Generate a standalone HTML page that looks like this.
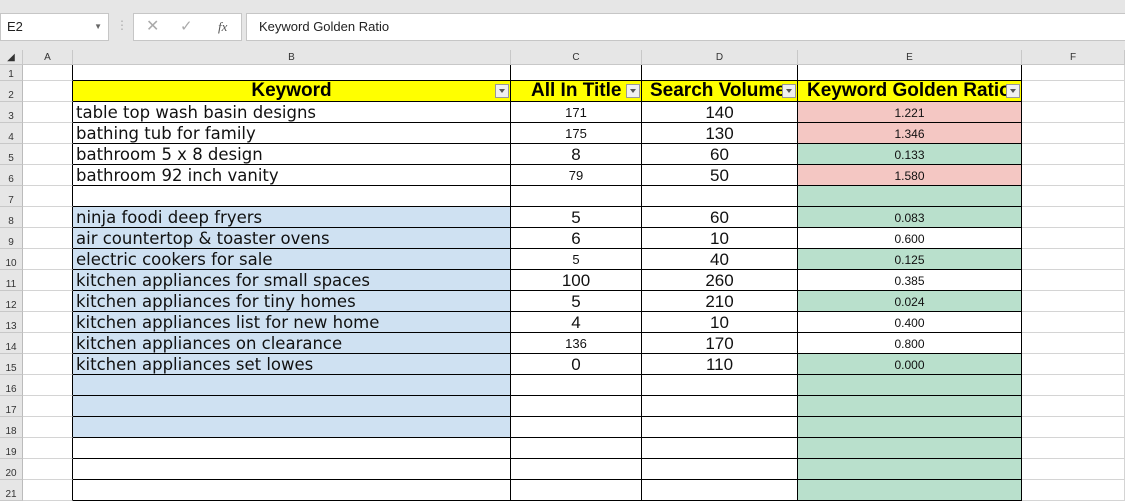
<!DOCTYPE html>
<html><head><style>
body{margin:0;width:1125px;height:484px;overflow:hidden;background:#fff;font-family:"Liberation Sans",sans-serif;position:relative}
.top{position:absolute;left:0;top:0;width:1125px;height:50px;background:#e6e6e6}
.box{position:absolute;background:#fff;border:1px solid #c6c6c6;height:26px;top:13px;font-size:13px;line-height:26px;color:#222}
table{position:absolute;left:0;top:50px;border-collapse:separate;border-spacing:0;table-layout:fixed}
td{padding:0;border-right:1px solid #d4d4d4;border-bottom:1px solid #d4d4d4;height:21px;overflow:hidden;white-space:nowrap;box-sizing:border-box}
tr.h td{height:15px;background:#e6e6e6;font-size:10px;text-align:center;color:#333;border-color:#c8c8c8}
tr.r1 td{height:16px}
td.n{background:#e6e6e6;font-size:10px;color:#333;text-align:center;vertical-align:bottom;border-color:#c8c8c8;border-right-color:#bbb}
td.a{border-right:1px solid #000}
td.k{border-right:1px solid #000;border-bottom:1px solid #000}
td.b{font-family:"DejaVu Sans",sans-serif;font-size:16.5px;padding-left:3px;color:#111;vertical-align:bottom;line-height:19px}
td.c,td.d,td.e{text-align:center;vertical-align:bottom;color:#111}
td.c{font-size:13px;line-height:18px}
td.c.g,td.d{font-size:17px;line-height:19px}
td.e{font-size:12px;line-height:18px}
.bl{background:#cfe1f2}.gr{background:#b9e0cc}.pk{background:#f4c7c3}
tr.hd td.k{background:#ff0;font-weight:bold;font-size:19px;text-align:center;line-height:20px}
.w{position:relative;height:20px;overflow:hidden}
.dd{position:absolute;right:1px;top:3px;width:14px;height:14px;background:#f0f0f0;border:1px solid #999;box-sizing:border-box}
.dd:after{content:"";position:absolute;left:3px;top:4px;border-left:3px solid transparent;border-right:3px solid transparent;border-top:4px solid #555}
</style></head><body>
<div class="top"></div>
<div class="box" style="left:0;width:101px;padding-left:6px">E2<span style="position:absolute;right:6px;top:0;font-size:8px;color:#666">▼</span></div>
<div style="position:absolute;left:116px;top:18px;color:#aaa;font-size:12px">⋮</div>
<div class="box" style="left:133px;width:107px;color:#aaa"><span style="position:absolute;left:12px;font-size:16px">✕</span><span style="position:absolute;left:46px;font-size:15px">✓</span><span style="position:absolute;left:84px;color:#555;font-family:'Liberation Serif',serif;font-style:italic">fx</span></div>
<div class="box" style="left:246px;width:880px;padding-left:12px">Keyword Golden Ratio</div>
<table>
<colgroup><col style="width:23px"><col style="width:50px"><col style="width:438px"><col style="width:131px"><col style="width:156px"><col style="width:224px"><col style="width:103px"></colgroup>
<tr class="h"><td>◢</td><td>A</td><td>B</td><td>C</td><td>D</td><td>E</td><td>F</td></tr>
<tr class="r1"><td class="n">1</td><td class="a"></td><td class="k"></td><td class="k"></td><td class="k"></td><td class="k"></td><td></td></tr>
<tr class="hd"><td class="n">2</td><td class="a"></td><td class="k"><div class="w">Keyword<span class="dd"></span></div></td><td class="k"><div class="w" style="text-align:left;padding-left:20px">All In Title<span class="dd"></span></div></td><td class="k"><div class="w" style="text-align:left;padding-left:8px">Search Volume<span class="dd"></span></div></td><td class="k"><div class="w" style="text-align:left;padding-left:9px">Keyword Golden Ratio<span class="dd"></span></div></td><td></td></tr>
<tr><td class="n">3</td><td class="a"></td><td class="k b">table top wash basin designs</td><td class="k c">171</td><td class="k d">140</td><td class="k e pk">1.221</td><td></td></tr>
<tr><td class="n">4</td><td class="a"></td><td class="k b">bathing tub for family</td><td class="k c">175</td><td class="k d">130</td><td class="k e pk">1.346</td><td></td></tr>
<tr><td class="n">5</td><td class="a"></td><td class="k b">bathroom 5 x 8 design</td><td class="k c g">8</td><td class="k d">60</td><td class="k e gr">0.133</td><td></td></tr>
<tr><td class="n">6</td><td class="a"></td><td class="k b">bathroom 92 inch vanity</td><td class="k c">79</td><td class="k d">50</td><td class="k e pk">1.580</td><td></td></tr>
<tr><td class="n">7</td><td class="a"></td><td class="k b"></td><td class="k c"></td><td class="k d"></td><td class="k e gr"></td><td></td></tr>
<tr><td class="n">8</td><td class="a"></td><td class="k b bl">ninja foodi deep fryers</td><td class="k c g">5</td><td class="k d">60</td><td class="k e gr">0.083</td><td></td></tr>
<tr><td class="n">9</td><td class="a"></td><td class="k b bl">air countertop &amp; toaster ovens</td><td class="k c g">6</td><td class="k d">10</td><td class="k e">0.600</td><td></td></tr>
<tr><td class="n">10</td><td class="a"></td><td class="k b bl">electric cookers for sale</td><td class="k c">5</td><td class="k d">40</td><td class="k e gr">0.125</td><td></td></tr>
<tr><td class="n">11</td><td class="a"></td><td class="k b bl">kitchen appliances for small spaces</td><td class="k c g">100</td><td class="k d">260</td><td class="k e">0.385</td><td></td></tr>
<tr><td class="n">12</td><td class="a"></td><td class="k b bl">kitchen appliances for tiny homes</td><td class="k c g">5</td><td class="k d">210</td><td class="k e gr">0.024</td><td></td></tr>
<tr><td class="n">13</td><td class="a"></td><td class="k b bl">kitchen appliances list for new home</td><td class="k c g">4</td><td class="k d">10</td><td class="k e">0.400</td><td></td></tr>
<tr><td class="n">14</td><td class="a"></td><td class="k b bl">kitchen appliances on clearance</td><td class="k c">136</td><td class="k d">170</td><td class="k e">0.800</td><td></td></tr>
<tr><td class="n">15</td><td class="a"></td><td class="k b bl">kitchen appliances set lowes</td><td class="k c g">0</td><td class="k d">110</td><td class="k e gr">0.000</td><td></td></tr>
<tr><td class="n">16</td><td class="a"></td><td class="k b bl"></td><td class="k c"></td><td class="k d"></td><td class="k e gr"></td><td></td></tr>
<tr><td class="n">17</td><td class="a"></td><td class="k b bl"></td><td class="k c"></td><td class="k d"></td><td class="k e gr"></td><td></td></tr>
<tr><td class="n">18</td><td class="a"></td><td class="k b bl"></td><td class="k c"></td><td class="k d"></td><td class="k e gr"></td><td></td></tr>
<tr><td class="n">19</td><td class="a"></td><td class="k b"></td><td class="k c"></td><td class="k d"></td><td class="k e gr"></td><td></td></tr>
<tr><td class="n">20</td><td class="a"></td><td class="k b"></td><td class="k c"></td><td class="k d"></td><td class="k e gr"></td><td></td></tr>
<tr><td class="n">21</td><td class="a"></td><td class="k b"></td><td class="k c"></td><td class="k d"></td><td class="k e gr"></td><td></td></tr>
</table>
</body></html>
